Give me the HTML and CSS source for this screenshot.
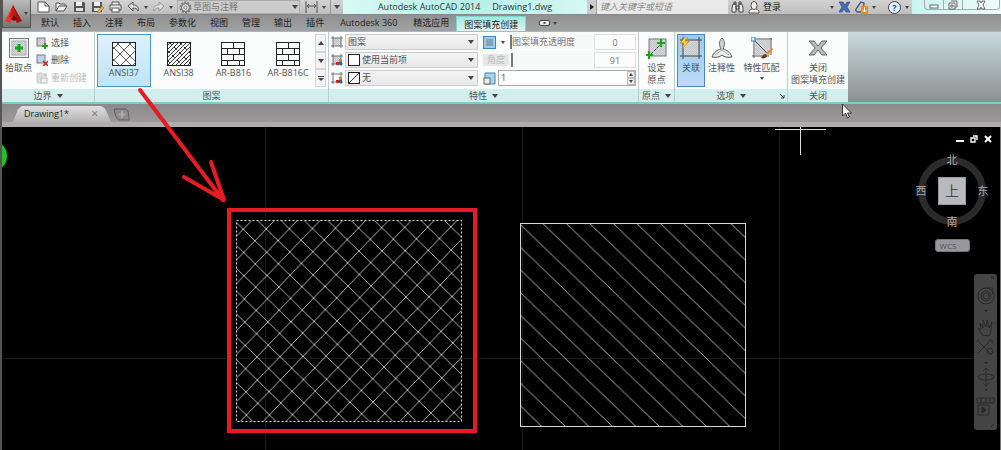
FILE: index.html
```
<!DOCTYPE html>
<html lang="zh-CN">
<head>
    <meta charset="UTF-8">
    <meta name="viewport" content="width=device-width, initial-scale=1.0">
    <title>Autodesk AutoCAD 2014 - Drawing1.dwg</title>
    <link rel="stylesheet" href="styles.css">
</head>
<body>
    <!-- Shared symbols -->
    <svg class="defs" width="0" height="0" aria-hidden="true">
        <defs>
            <pattern id="dots" width="2" height="2" patternUnits="userSpaceOnUse">
                <rect width="2" height="2" fill="#d5d8da"/>
                <path d="M0 2L2 0" stroke="#b0b4b8" stroke-width=".5"/>
            </pattern>
            <symbol id="hatch-box" viewBox="0 0 12 12">
                <rect x="2" y="2" width="8" height="8" fill="url(#dots)"/>
                <path d="M2 0v12M10 0v12M0 2h12M0 10h12" stroke="#555" stroke-width=".8" fill="none"/>
            </symbol>
            <symbol id="brick" viewBox="0 0 24 24">
                <rect x=".5" y=".5" width="23" height="23" fill="#fff" stroke="#222"/>
                <path d="M0 6.500h24M0 12.500h24M0 18.500h24M12.500 0v6M6.500 6v6M18.500 6v6M12.500 12v6M6.500 18v6M18.500 18v6" stroke="#222" fill="none"/>
            </symbol>
        </defs>
    </svg>

    <div class="app">
        <header class="header">
            <button class="app-button" aria-label="应用程序菜单">
                <svg width="17" height="20" viewBox="0 0 17 20">
                    <path d="M8 1L0 17l5 2 4-5z" fill="#e8382c"/>
                    <path d="M8 1l9 16-5 2-4-7z" fill="#a30f0c"/>
                    <path d="M8 1L4 14l4-2 4 3z" fill="#c81b16"/>
                    <path d="M6 15l3-4 3 4-3 2z" fill="#6e0808"/>
                </svg>
                <span class="caret"></span>
            </button>

            <div class="header-rows">
                <div class="title-row">
                    <div class="quick-access">
                        <button class="icon-btn" aria-label="新建"><svg width="13" height="12" viewBox="0 0 13 12"><path d="M1 1h7l4 4v6H1z" fill="#fff" stroke="#555"/><path d="M8 1v4h4" fill="none" stroke="#555"/></svg></button>
                        <button class="icon-btn" aria-label="打开"><svg width="13" height="12" viewBox="0 0 13 12"><path d="M1 10V2h3l1 1h5v2M1 10l3-5h8l-3 5z" fill="#eee" stroke="#555"/></svg></button>
                        <button class="icon-btn" aria-label="保存"><svg width="13" height="12" viewBox="0 0 13 12"><path d="M1 1h10l1 1v9H1z" fill="#555"/><rect x="3" y="1" width="6" height="4" fill="#eee"/><rect x="3" y="7" width="7" height="3" fill="#ddd"/></svg></button>
                        <button class="icon-btn" aria-label="另存为"><svg width="13" height="12" viewBox="0 0 13 12"><path d="M1 1h10v10H1z" fill="#555"/><rect x="3" y="1" width="6" height="4" fill="#eee"/><rect x="3" y="7" width="6" height="3" fill="#ddd"/><path d="M6 11l5-6 2 2-5 5z" fill="#e7b245" stroke="#7a5a1c" stroke-width=".5"/></svg></button>
                        <button class="icon-btn" aria-label="打印"><svg width="13" height="12" viewBox="0 0 13 12"><path d="M3 4V1h7v3M1 4h11v5H1z" fill="#eee" stroke="#555"/><rect x="3" y="7" width="7" height="4" fill="#fff" stroke="#555"/></svg></button>
                        <button class="icon-btn" aria-label="放弃"><svg width="13" height="12" viewBox="0 0 13 12"><path d="M1 5l5-4v3c4 0 6 2 5 6-1-2-2-3-5-3v3z" fill="#ddd" stroke="#555"/></svg></button>
                        <span class="caret"></span>
                        <button class="icon-btn" aria-label="重做"><svg width="13" height="12" viewBox="0 0 13 12"><path d="M12 5L7 1v3C3 4 1 6 2 10c1-2 2-3 5-3v3z" fill="#ddd" stroke="#999"/></svg></button>
                        <span class="caret"></span>
                        <div class="workspace">
                            <svg width="13" height="13" viewBox="0 0 13 13"><circle cx="6.500" cy="6.500" r="5" fill="none" stroke="#777" stroke-width="2" stroke-dasharray="2 1.100"/><circle cx="6.500" cy="6.500" r="4" fill="#ddd" stroke="#666"/><circle cx="6.500" cy="6.500" r="1.500" fill="#fff" stroke="#777"/></svg>
                            <select aria-label="工作空间"><option>草图与注释</option></select>
                            <span class="caret wide"></span>
                        </div>
                        <button class="icon-btn" aria-label="标注"><svg width="13" height="12" viewBox="0 0 13 12"><path d="M1 0v12M12 0v12M2 5h9M4 3L2 5l2 2M9 3l2 2-2 2" fill="none" stroke="#555"/></svg></button>
                        <span class="caret"></span>
                        <button class="customize" aria-label="自定义快速访问工具栏"><span class="caret wide"></span></button>
                    </div>

                    <div class="window-title">
                        <span>Autodesk AutoCAD 2014</span>
                        <span>Drawing1.dwg</span>
                    </div>

                    <div class="search">
                        <button class="search-toggle" aria-label="展开搜索"></button>
                        <input type="text" placeholder="键入关键字或短语" aria-label="搜索">
                    </div>

                    <div class="account">
                        <button class="icon-btn" aria-label="查找"><svg width="13" height="13" viewBox="0 0 13 13"><path d="M2 3h3v8H1V7zM8 3h3l1 4v4H8zM5 5h3v3H5zM3 1h2v2H3zM8 1h2v2H8z" fill="#eee" stroke="#444"/></svg></button>
                        <button class="login">
                            <svg width="12" height="13" viewBox="0 0 12 13"><path d="M4 8C1 9 1 10 1 12h10c0-2 0-3-3-4" fill="#eee" stroke="#555"/><ellipse cx="6" cy="4.500" rx="3" ry="4" fill="#eee" stroke="#555"/></svg>
                            登录
                        </button>
                        <span class="caret push"></span>
                        <button class="icon-btn" aria-label="Exchange"><svg width="13" height="12" viewBox="0 0 13 12"><path d="M1 1h4l2 3 2-3h3L9 6l3 5H8L6 8l-2 3H1l3-5z" fill="#4a6cb4" stroke="#223c78" stroke-width=".6"/></svg></button>
                        <button class="icon-btn" aria-label="保持连接"><svg width="13" height="13" viewBox="0 0 13 13"><path d="M6 1L1 8c-1 2 1 3 2 3h5L9 2z" fill="none" stroke="#456" stroke-width="1.300"/><rect x="6" y="5" width="7" height="8" rx="1" fill="#e58b22"/><path d="M9.500 6v5M7.500 9l2 2 2-2" stroke="#fff" fill="none"/></svg></button>
                        <span class="caret"></span>
                        <button class="help" aria-label="帮助">?</button>
                        <span class="caret"></span>
                    </div>

                    <div class="window-controls">
                        <button aria-label="最小化"><svg width="10" height="10" viewBox="0 0 10 10"><rect x="1" y="5" width="8" height="3" fill="#fff" stroke="#666"/></svg></button>
                        <button aria-label="还原"><svg width="10" height="10" viewBox="0 0 10 10"><path d="M3 1h6v6H7M1 3h6v6H1zM3 5h2v2H3z" fill="#fff" stroke="#666"/></svg></button>
                        <button class="close" aria-label="关闭窗口"><svg width="10" height="10" viewBox="0 0 10 10"><path d="M1 1h3l1 2 1-2h3L7 5l2 4H6L5 7 4 9H1l2-4z" fill="#fff" stroke="#666"/></svg></button>
                    </div>
                </div>

                <nav class="tabs">
                    <a href="#">默认</a>
                    <a href="#">插入</a>
                    <a href="#">注释</a>
                    <a href="#">布局</a>
                    <a href="#">参数化</a>
                    <a href="#">视图</a>
                    <a href="#">管理</a>
                    <a href="#">输出</a>
                    <a href="#">插件</a>
                    <a href="#" class="latin">Autodesk 360</a>
                    <a href="#">精选应用</a>
                    <a href="#" class="active">图案填充创建</a>
                    <button class="tabs-toggle" aria-label="最小化功能区"><span class="pill"></span><span class="caret"></span></button>
                </nav>
            </div>
        </header>

        <div class="ribbon">
            <section class="panel panel-boundary">
                <div class="panel-body">
                    <button class="tool">
                        <svg width="20" height="20" viewBox="0 0 20 20"><rect x=".5" y=".5" width="19" height="19" fill="#eef0f1" stroke="#777"/><rect x="3" y="3" width="14" height="14" fill="url(#dots)" stroke="#aaa"/><path d="M8.500 6h3v2.500H14v3h-2.500V14h-3v-2.500H6v-3h2.500z" fill="#19a61c"/></svg>
                        <span>拾取点</span>
                    </button>
                    <div class="stack">
                        <button><svg width="12" height="12" viewBox="0 0 12 12"><rect x="1" y="1" width="8" height="8" fill="url(#dots)" stroke="#778"/><path d="M9 6v6M6 9h6" stroke="#19a61c" stroke-width="2"/></svg>选择</button>
                        <button><svg width="12" height="12" viewBox="0 0 12 12"><rect x="1" y="1" width="8" height="8" fill="#bcd4ea" stroke="#778"/><path d="M7 7l5 5M12 7l-5 5" stroke="#d02626" stroke-width="1.600"/></svg>删除</button>
                        <button disabled><svg width="12" height="12" viewBox="0 0 12 12"><path d="M1 1h5v10H1z" fill="#ddd" stroke="#ccc"/><circle cx="9" cy="3" r="2" fill="#ccc"/><rect x="5" y="6" width="6" height="5" fill="#eee" stroke="#bbb"/></svg>重新创建</button>
                    </div>
                </div>
                <h2 class="panel-title">边界 <span class="caret wide"></span></h2>
            </section>

            <section class="panel panel-pattern">
                <div class="panel-body">
                    <div class="gallery">
                        <button class="swatch selected">
                            <svg width="24" height="24" viewBox="0 0 24 24"><rect x=".5" y=".5" width="23" height="23" fill="#fff" stroke="#222"/><path d="M0 8l8-8M0 20L20 0M8 24L24 8M20 24l4-4M0 4l20 20M4 0l20 20M16 0l8 8M0 16l8 8" stroke="#333" stroke-width=".8"/></svg>
                            <span>ANSI37</span>
                        </button>
                        <button class="swatch">
                            <svg width="24" height="24" viewBox="0 0 24 24"><rect x=".5" y=".5" width="23" height="23" fill="#fff" stroke="#222"/><path d="M0 4l4-4M0 8l8-8M0 12L12 0M0 16L16 0M0 20L20 0M0 24L24 0M4 24L24 4M8 24L24 8M12 24l12-12M16 24l8-8M20 24l4-4" stroke="#222" stroke-width=".9"/><path d="M2 0l22 22M12 0l12 12M0 8l16 16M0 18l6 6" stroke="#222" stroke-dasharray="4 3"/></svg>
                            <span>ANSI38</span>
                        </button>
                        <button class="swatch">
                            <svg width="24" height="24"><use href="#brick"/></svg>
                            <span>AR-B816</span>
                        </button>
                        <button class="swatch">
                            <svg width="24" height="24"><use href="#brick"/></svg>
                            <span>AR-B816C</span>
                        </button>
                    </div>
                    <div class="gallery-scroll">
                        <button aria-label="上一行"><span class="caret wide up"></span></button>
                        <button aria-label="下一行"><span class="caret wide"></span></button>
                        <button class="more" aria-label="更多"><span class="caret wide"></span></button>
                    </div>
                </div>
                <h2 class="panel-title">图案</h2>
            </section>

            <section class="panel panel-props">
                <div class="panel-body">
                    <div class="fields">
                        <div class="field">
                            <svg width="12" height="12"><use href="#hatch-box"/></svg>
                            <div class="drop"><select aria-label="图案填充类型"><option>图案</option></select><span class="caret wide"></span></div>
                        </div>
                        <div class="field">
                            <svg width="12" height="12" viewBox="0 0 12 12"><use href="#hatch-box"/><rect x="8" y="5" width="3" height="3" fill="#e07b28"/><rect x="5" y="8" width="3" height="3" fill="#d02626"/><rect x="8" y="8" width="3" height="3" fill="#2b5fb0"/></svg>
                            <div class="drop"><i class="chip"></i><select aria-label="图案填充颜色"><option>使用当前项</option></select><span class="caret wide"></span></div>
                        </div>
                        <div class="field">
                            <svg width="12" height="12" viewBox="0 0 12 12"><path d="M2 0v12M10 0v12M0 2h12M0 10h12" stroke="#555" stroke-width=".8"/><rect x="8" y="5" width="3" height="3" fill="#e07b28"/><rect x="5" y="8" width="3" height="3" fill="#d02626"/><rect x="8" y="8" width="3" height="3" fill="#2b5fb0"/></svg>
                            <div class="drop"><i class="chip none"></i><select aria-label="背景色"><option>无</option></select><span class="caret wide"></span></div>
                        </div>
                    </div>
                    <div class="fields fields-wide">
                        <div class="field">
                            <button class="transparency" aria-label="透明度来源"><i></i></button>
                            <span class="caret"></span>
                            <label class="slider" for="opacity">图案填充透明度</label>
                            <input class="value" id="opacity" type="text" value="0">
                        </div>
                        <div class="field">
                            <span class="angle-name">角度</span>
                            <label class="slider" for="angle"></label>
                            <input class="value" id="angle" type="text" value="91" aria-label="角度">
                        </div>
                        <div class="field">
                            <svg width="13" height="13" viewBox="0 0 13 13"><path d="M2 1h10v11H2z" fill="#a9d2ee" stroke="#4484b4"/><rect x="1" y="6" width="6" height="6" fill="#eee" stroke="#666"/></svg>
                            <div class="spinner">
                                <input type="text" value="1" aria-label="比例">
                                <span class="spin-buttons">
                                    <button aria-label="增加"><span class="caret up"></span></button>
                                    <button aria-label="减少"><span class="caret"></span></button>
                                </span>
                            </div>
                        </div>
                    </div>
                </div>
                <h2 class="panel-title">特性 <span class="caret wide"></span></h2>
            </section>

            <section class="panel panel-origin">
                <div class="panel-body">
                    <button class="tool">
                        <svg width="22" height="22" viewBox="0 0 22 22"><rect x="3" y="2" width="17" height="17" fill="url(#dots)" stroke="#777"/><path d="M5 17L15 7" stroke="#444" stroke-dasharray="3 1"/><path d="M3 14v8M0 18h7M15 2v8M11 6h8" stroke="#19a61c" stroke-width="2.200"/></svg>
                        <span>设定<br>原点</span>
                    </button>
                </div>
                <h2 class="panel-title">原点 <span class="caret wide"></span></h2>
            </section>

            <section class="panel panel-options">
                <div class="panel-body">
                    <button class="tool pressed">
                        <svg width="22" height="22" viewBox="0 0 22 22"><rect x="3" y="3" width="16" height="16" fill="url(#dots)"/><path d="M3 0v22M19 0v22M0 3h22M0 19h22" stroke="#444"/><path d="M5 0L0 6h4l-2 6 7-8H5l3-4z" fill="#ffd23c" stroke="#c77d14" stroke-width=".7"/></svg>
                        <span>关联</span>
                    </button>
                    <button class="tool">
                        <svg width="22" height="22" viewBox="0 0 22 22"><path d="M11 1c3 3 3 7 1 11 4 1 7 3 9 8-4 1-8 0-10-2-2 2-6 3-10 2 2-5 5-7 9-8-2-4-2-8 1-11z" fill="#eee" stroke="#555"/><path d="M11 3v10l-7 5M11 13l7 5" stroke="#aaa" fill="none"/></svg>
                        <span>注释性</span>
                    </button>
                    <button class="tool match">
                        <svg width="22" height="22" viewBox="0 0 22 22"><rect x="4" y="3" width="15" height="15" fill="url(#dots)"/><path d="M3 3v18M4 2h17M20 1v17M1 19h17M3 3l14 14" stroke="#555" fill="none"/><rect x="0" y="0" width="4" height="4" fill="#e0f0ff" stroke="#2e86c8"/><path d="M21 11l-6 5 2 2 5-6z" fill="#e98732"/><path d="M10 21c1-1 2-4 5-4l1 2c0 2-4 3-6 2z" fill="#6b3a1a"/></svg>
                        <span>特性匹配</span>
                        <i class="caret"></i>
                    </button>
                </div>
                <h2 class="panel-title">选项 <span class="caret wide"></span>
                    <svg class="launcher" width="5" height="5" viewBox="0 0 5 5"><path d="M0 0l4 4M4 1v3H1" stroke="#333" fill="none"/></svg>
                </h2>
            </section>

            <section class="panel panel-close">
                <div class="panel-body">
                    <button class="tool">
                        <svg width="20" height="20" viewBox="0 0 20 20"><path d="M1 3h5l4 5 4-5h5l-6 7 6 7h-5l-4-5-4 5H1l6-7z" fill="#b9b9b9" stroke="#666"/></svg>
                        <span>关闭<br>图案填充创建</span>
                    </button>
                </div>
                <h2 class="panel-title">关闭</h2>
            </section>
        </div>

        <div class="doc-tabs">
            <div class="doc-tab">
                <span>Drawing1*</span>
                <button aria-label="关闭图形">×</button>
            </div>
            <button class="new-tab" aria-label="新图形"><svg width="18" height="13" viewBox="0 0 18 13"><path d="M1 1h11c3 0 4 4 4 11H7C3 12 2 6 1 1z" fill="#8b8b8b" stroke="#5f5f5f"/><path d="M9 3v7M5.500 6.500h7" stroke="#aaa" stroke-width="2"/></svg></button>
        </div>

        <main class="canvas">
            <svg class="drawing" width="100%" height="100%">
                <defs>
                    <pattern id="ansi37" width="23" height="23" patternUnits="userSpaceOnUse" patternTransform="matrix(1.003 -.012 .017 1.010 266.300 102)">
                        <path d="M-1 -1L24 24M-1 24L24 -1M22 -1l2 2M-1 22l2 2M-1 1l2-2M22 24l2-2" stroke="#c4c4c4" stroke-width=".9"/>
                    </pattern>
                    <pattern id="ansi31" width="23" height="23" patternUnits="userSpaceOnUse" patternTransform="matrix(1.022 0 0 .985 542.300 96)">
                        <path d="M-1 -1L24 24M22 -1l2 2M-1 22l2 2" stroke="#c4c4c4" stroke-width=".9"/>
                    </pattern>
                </defs>
                <path class="grid-line" d="M265.500 0v900M522.500 0v900M779.500 0v900M0 231.500h4000"/>
                <circle cx="-9" cy="29" r="16" fill="#1fc22a"/>
                <rect x="236.500" y="93.500" width="225" height="201" fill="url(#ansi37)" stroke="#ddd" stroke-dasharray="2 2"/>
                <rect x="520.500" y="96.500" width="225" height="203" fill="url(#ansi31)" stroke="#d8d8d8"/>
                <path d="M775 2.500h51M800.500 0v28" stroke="#ddd"/>
            </svg>

            <div class="view-tools">
                <div class="doc-controls">
                    <button aria-label="最小化图形"><svg width="8" height="8" viewBox="0 0 8 8"><path d="M0 6h8" stroke="#fff" stroke-width="2"/></svg></button>
                    <button aria-label="还原图形"><svg width="8" height="8" viewBox="0 0 8 8"><path d="M3 1h4v4M1 3h4v4H1z" stroke="#fff" stroke-width="1.400" fill="none"/></svg></button>
                    <button aria-label="关闭图形窗口"><svg width="8" height="8" viewBox="0 0 8 8"><path d="M1 1l6 6M7 1L1 7" stroke="#fff" stroke-width="2"/></svg></button>
                </div>
                <div class="compass">
                    <span class="north">北</span>
                    <span class="west">西</span>
                    <button class="cube">上</button>
                    <span class="east">东</span>
                    <span class="south">南</span>
                </div>
                <button class="wcs">WCS</button>
            </div>

            <div class="nav-bar">
                <svg width="23" height="156" viewBox="0 0 23 156" fill="none" stroke="#262626">
                    <path d="M17 2l3 3M20 2l-3 3M17 153l3-3"/>
                    <path d="M10 36h4l-2 2zM10 88h4l-2 2zM10 115h4l-2 2z" fill="#262626" stroke="none"/>
                    <g stroke-width=".8">
                        <circle cx="12" cy="22" r="8"/><circle cx="12" cy="22" r="5"/><circle cx="12" cy="22" r="3"/><path d="M13 14h6v7"/>
                        <path d="M8 61c-1-3-3-4-4-7l3 2-1-7 3 5v-8l3 7 1-7 2 8 3-6-1 8c0 3-1 4-2 6z"/>
                        <path d="M4 67l14 14M16 67L4 79M2 68l3-3M15 66h3v3"/><circle cx="16" cy="77" r="3"/>
                        <path d="M12 94v18M9 97l3-3 3 3M9 109l3 3 3-3"/><ellipse cx="12" cy="103" rx="8" ry="3"/>
                        <path d="M3 124h17v5H3zM7 124v5M12 124v5M16 124v5M4 131h11v10H4z"/>
                    </g>
                    <path d="M8 133l4 3-4 3z" fill="#262626"/>
                </svg>
            </div>
        </main>

        <!-- Tutorial markup drawn over the window -->
        <svg class="markup" width="100%" height="100%">
            <g fill="none" stroke="#e51c23" stroke-linecap="round">
                <path d="M140 90L223 200M184 177l40 23-13-38" stroke-width="4" stroke-linejoin="round"/>
                <rect x="229" y="210" width="246" height="221" stroke-width="4"/>
            </g>
            <path d="M842.500 104v12l3-3 2 5 2-1-2-4h4z" fill="#fff" stroke="#333"/>
        </svg>
    </div>
</body>
</html>
```
FILE: styles.css
```
* {
    margin: 0;
    padding: 0;
    box-sizing: border-box;
}

body {
    font-family: "Open Sans", "Noto Sans CJK SC", sans-serif;
    font-size: 9px;
    line-height: 12px;
    color: #555;
    background: #000;
}

button,
input,
select {
    font: inherit;
    color: inherit;
    background: none;
    border: none;
    outline: none;
}

select {
    appearance: none;
    flex: 1;
    min-width: 0;
}

input {
    min-width: 0;
}

a {
    color: inherit;
    text-decoration: none;
}

svg {
    display: block;
    flex-shrink: 0;
}

.defs {
    position: absolute;
}

.app {
    position: relative;
    display: flex;
    flex-direction: column;
    min-height: 100vh;
    border-left: 2px solid #555;
    overflow: hidden;
}

.caret {
    flex-shrink: 0;
    display: inline-block;
    border: 2px solid transparent;
    border-top: 3px solid #444;
    border-bottom: 0;
}

.caret.wide {
    border-width: 4px 3px 0;
}

.caret.up {
    transform: rotate(180deg);
}

/* Header */
.header {
    display: flex;
    height: 31px;
    background: #999;
}

.app-button {
    display: flex;
    align-items: center;
    justify-content: center;
    gap: 2px;
    width: 29px;
    height: 28px;
    background: linear-gradient(#bbb, #777);
    border: 1px solid #555;
    border-top: 0;
}

.header-rows {
    flex: 1;
    min-width: 0;
}

.title-row {
    display: flex;
    height: 15px;
    background: linear-gradient(#d2d2d2, #bdbdbd);
    border-bottom: 1px solid #888;
}

.quick-access {
    display: flex;
    align-items: center;
    gap: 5px;
    width: 312px;
    padding-left: 6px;
}

.quick-access > .caret {
    margin: 0 -1px;
}

.icon-btn {
    flex-shrink: 0;
}

.workspace {
    flex: 1;
    display: flex;
    align-items: center;
    gap: 1px;
    height: 14px;
    padding: 0 1px;
    border: 1px solid #aaa;
    background: #ccc;
    color: #777;
}

.customize {
    display: flex;
    align-items: center;
    height: 14px;
    padding: 0 3px;
    border-left: 1px solid #999;
}

.window-title {
    flex: 1;
    display: flex;
    justify-content: center;
    gap: 12px;
    line-height: 14px;
    color: #333;
    background: linear-gradient(90deg, #d8faf5, #b5efe8 50%, #d5f8f3);
    white-space: nowrap;
}

.search {
    display: flex;
    width: 141px;
    background: #e9e9e9;
}

.search-toggle {
    width: 10px;
    background: #ccc;
    border-right: 1px solid #999;
}

.search-toggle::before {
    content: "";
    display: block;
    margin-left: 3px;
    border: 3px solid transparent;
    border-left: 4px solid #222;
    border-right: 0;
}

.search input {
    flex: 1;
    padding-left: 3px;
}

.search input::placeholder {
    color: #888;
    font-style: italic;
}

.account {
    display: flex;
    align-items: center;
    gap: 4px;
    width: 184px;
    padding: 0 3px;
}

.account .push {
    margin-left: auto;
}

.login {
    display: flex;
    align-items: center;
    gap: 3px;
    color: #222;
}

.help {
    width: 13px;
    height: 13px;
    margin-left: 8px;
    border: 1px solid #345;
    border-radius: 50%;
    background: #e8f0fa;
    color: #24508c;
    font-weight: bold;
    line-height: 11px;
}

.window-controls {
    display: flex;
    width: 89px;
    padding: 0 1px 4px 12px;
    background: linear-gradient(90deg, #c9f5ef, #effdfb);
}

.window-controls button {
    flex: 1;
    display: flex;
    align-items: center;
    justify-content: center;
    border: 1px solid #aaa;
    border-top: 0;
    border-right: 0;
}

.window-controls button:first-child {
    border-bottom-left-radius: 4px;
}

.window-controls .close {
    flex: 2;
    border-right: 1px solid #aaa;
    border-bottom-right-radius: 4px;
}

.tabs {
    display: flex;
    height: 16px;
    padding-left: 3px;
    line-height: 16px;
    color: #222;
    background: linear-gradient(#909090, #a2a2a2);
    white-space: nowrap;
}

.tabs a {
    padding: 0 7px;
}

.tabs .latin {
    padding: 0 9px;
}

.tabs .active {
    margin-top: 1px;
    line-height: 15px;
    background: linear-gradient(#9fe8e0, #dcf6f3);
    border: 1px solid #7cd6cc;
    border-bottom: 0;
}

.tabs-toggle {
    display: flex;
    align-items: center;
    gap: 3px;
    margin-left: 13px;
}

.pill {
    width: 11px;
    height: 6px;
    border: 1px solid #444;
    border-radius: 2px;
    background: radial-gradient(#444 1px, #eee 2px);
}

/* Ribbon */
.ribbon {
    display: flex;
    height: 73px;
    background: linear-gradient(#c9d9dd, #8b9090);
    border-top: 1px solid #6fd3ca;
    border-bottom: 2px solid #7ccfc7;
}

.panel {
    display: flex;
    flex-direction: column;
    background: #fbfcfc;
    border-right: 1px solid #b9cfce;
    white-space: nowrap;
}

.panel-body {
    flex: 1;
    display: flex;
    padding: 2px;
}

.panel-title {
    position: relative;
    display: flex;
    align-items: center;
    justify-content: center;
    gap: 5px;
    height: 13px;
    font-size: 9px;
    font-weight: normal;
    background: #d3efed;
}

.tool {
    display: flex;
    flex-direction: column;
    align-items: center;
    gap: 3px;
    padding-top: 3px;
}

.tool svg {
    height: 22px;
}

.panel-boundary {
    width: 93px;
}

.panel-boundary .panel-body {
    gap: 4px;
    padding-left: 3px;
}

.stack {
    display: flex;
    flex-direction: column;
    justify-content: space-around;
}

.stack button {
    display: flex;
    align-items: center;
    gap: 3px;
    height: 17px;
}

.stack button:disabled {
    color: #bbb;
}

.panel-pattern {
    width: 234px;
}

.gallery {
    flex: 1;
    display: flex;
    gap: 1px;
}

.swatch {
    flex: 1;
    display: flex;
    flex-direction: column;
    align-items: center;
    gap: 1px;
    padding-top: 7px;
    border: 1px solid transparent;
}

.swatch.selected {
    background: linear-gradient(#def1fc, #bfe3f8);
    border-color: #4f96c8;
}

.gallery-scroll {
    display: flex;
    flex-direction: column;
    width: 11px;
}

.gallery-scroll button {
    flex: 1;
    display: flex;
    align-items: center;
    justify-content: center;
    background: #f3f3f3;
    border: 1px solid #d5d5d5;
}

.gallery-scroll .more .caret {
    border-top-width: 3px;
}

.gallery-scroll .more {
    flex-direction: column;
    gap: 1px;
}

.gallery-scroll .more::before {
    content: "";
    width: 6px;
    height: 1px;
    background: #444;
}

.panel-props {
    width: 310px;
}

.panel-props .panel-body {
    gap: 5px;
}

.fields {
    display: flex;
    flex-direction: column;
    gap: 2px;
    width: 147px;
}

.fields-wide {
    flex: 1;
    width: auto;
}

.field {
    display: flex;
    align-items: center;
    gap: 2px;
    height: 16px;
}

.drop {
    flex: 1;
    display: flex;
    align-items: center;
    gap: 2px;
    height: 16px;
    padding: 0 3px 0 2px;
    background: linear-gradient(#f4f4f4, #e8e8e8);
    border: 1px solid #ccc;
}

.chip {
    width: 12px;
    height: 12px;
    border: 1px solid #222;
    background: #fff;
}

.chip.none {
    background: linear-gradient(135deg, #fff 46%, #333 47%, #333 53%, #fff 54%);
}

.transparency {
    width: 13px;
    height: 13px;
    padding: 2px;
    background: #9fcbe9;
    border: 1px solid #4484b4;
}

.transparency i {
    display: block;
    height: 7px;
    background: #7fa5bd;
}

.transparency + .caret {
    margin: 0 3px;
}

.slider {
    flex: 1;
    height: 14px;
    border-left: 2px solid #777;
    color: #777;
    line-height: 14px;
    background: #f8f8f8;
}

.angle-name {
    width: 26px;
    background: #e6e6e6;
    color: #bbb;
    text-align: center;
}

.value {
    width: 42px;
    height: 16px;
    border: 1px solid #ddd;
    text-align: center;
    color: #777;
}

.spinner {
    flex: 1;
    display: flex;
    height: 16px;
    background: #fff;
    border: 1px solid #aaa;
}

.spinner input {
    flex: 1;
    padding-left: 2px;
}

.spin-buttons {
    display: flex;
    flex-direction: column;
    width: 8px;
}

.spin-buttons button {
    flex: 1;
    display: flex;
    align-items: center;
    justify-content: center;
    background: #eee;
    border: 1px solid #bbb;
}

.panel-origin {
    width: 36px;
}

.panel-origin .panel-body {
    justify-content: center;
}

.panel-options {
    width: 113px;
}

.panel-options .panel-body {
    gap: 2px;
}

.panel-options .tool {
    padding-left: 1px;
    padding-right: 1px;
}

.panel-options .pressed {
    width: 28px;
    background: linear-gradient(#9fc8ec, #bcdcf6);
    border: 1px solid #4b88c4;
    padding-top: 2px;
}

.panel-options .match {
    flex: 1;
}

.launcher {
    position: absolute;
    right: 2px;
    bottom: 3px;
}

.panel-close {
    width: 60px;
    border-right: 0;
}

.panel-close .panel-body {
    justify-content: center;
}

/* Drawing tabs */
.doc-tabs {
    display: flex;
    align-items: flex-end;
    gap: 2px;
    height: 23px;
    padding-left: 11px;
    background: linear-gradient(#8b8989, #9b9999);
    border-bottom: 5px solid #aeacac;
}

.doc-tab {
    display: flex;
    align-items: center;
    justify-content: space-between;
    width: 98px;
    height: 16px;
    padding: 0 13px 0 11px;
    color: #222;
    background: linear-gradient(#dedede, #b4b4b4);
    clip-path: polygon(0 100%, 5px 20%, 9px 0, 88px 0, 92px 15%, 100% 100%);
}

.doc-tab button {
    color: #777;
    font-size: 12px;
}

.new-tab {
    padding-bottom: 1px;
}

/* Model space */
.canvas {
    position: relative;
    flex: 1;
    background: #000;
    border-right: 1px solid #777;
}

.drawing {
    position: absolute;
    top: 0;
    left: -2px;
}

.grid-line {
    stroke: #191919;
    fill: none;
}

.view-tools {
    position: absolute;
    top: 8px;
    right: 8px;
    display: flex;
    flex-direction: column;
    align-items: center;
    width: 80px;
}

.doc-controls {
    align-self: flex-end;
    display: flex;
    gap: 6px;
}

.compass {
    position: relative;
    display: grid;
    grid-template-columns: 14px 28px 14px;
    grid-template-rows: 14px 28px 14px;
    gap: 10px;
    place-items: center;
    margin-top: 10px;
    color: #aaa;
    font-size: 11px;
}

.compass::before {
    content: "";
    position: absolute;
    inset: 4px;
    border: 7px solid #2b2b2b;
    border-radius: 50%;
}

.compass > * {
    position: relative;
}

.north,
.south {
    grid-column: 1 / 4;
}

.cube {
    width: 28px;
    height: 28px;
    background: #b9babd;
    border: 1px solid #999;
    color: #444a5c;
    font-size: 14px;
}

.wcs {
    width: 35px;
    height: 13px;
    margin-top: 10px;
    padding-left: 4px;
    border: 1px solid #777;
    border-radius: 3px;
    background: #97979c;
    color: #555;
    font-size: 8px;
    line-height: 10px;
    text-align: left;
}

.nav-bar {
    position: absolute;
    top: 147px;
    right: 3px;
    border-radius: 3px;
    background: #444;
}

.markup {
    position: absolute;
    top: 0;
    left: -2px;
    pointer-events: none;
}
```
